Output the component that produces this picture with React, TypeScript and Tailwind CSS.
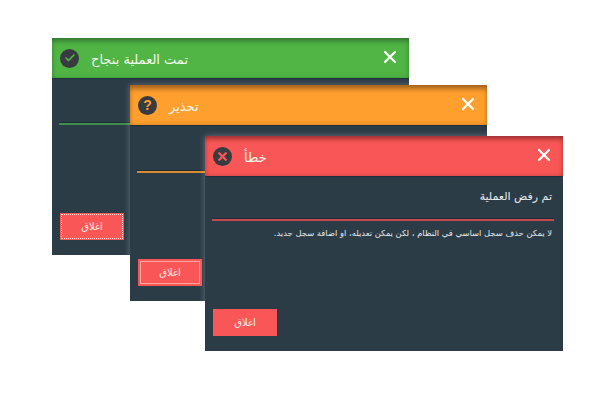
import {X, Check} from 'lucide-react';
import type {ReactNode} from 'react';

const arabic = '[font-family:"DejaVu_Sans",sans-serif]';

type DialogProps = {
  className: string;
  headerClass: string;
  icon: ReactNode;
  title: string;
  subtitle?: string;
  message?: string;
  ruleClass: string;
  buttonClass: string;
};

function StatusIcon({children, color}: {children: ReactNode; color: string}) {
  return (
    <span className={`flex h-[19px] w-[19px] items-center justify-center rounded-full bg-[#383b40] ${color}`}>
      {children}
    </span>
  );
}

function Dialog({className, headerClass, icon, title, subtitle, message, ruleClass, buttonClass}: DialogProps) {
  return (
    <div className={`absolute flex flex-col bg-[#2c3c47] shadow-[0_0_6px_rgba(255,255,255,0.28)] ${className}`}>
      <div className={`flex h-[41px] shrink-0 items-center justify-between border-b border-[#1d2f3e] pl-2 pr-[9px] ${headerClass}`}>
        <div className="flex items-center gap-3">
          {icon}
          <span className={`${arabic} mt-[3px] text-[13px] leading-none text-[#f4f7ee]`}>{title}</span>
        </div>
        <X size={20} strokeWidth={2.6} className="-mt-[3px] text-white" />
      </div>
      <div dir="rtl" className="flex flex-1 flex-col pb-[15px] pl-[7px] pr-[9px] pt-[12px]">
        <p className={`${arabic} h-[16px] pr-[2px] text-[11px] leading-[16px] text-[#e8edf0]`}>{subtitle}</p>
        <div className={`h-[3px] w-full shrink-0 border-t border-[#1d2f3e] ${ruleClass}`} />
        <p className={`${arabic} mt-[5px] h-[14px] pr-[2px] text-[8.4px] leading-[14px] text-[#e3e8eb]`}>{message}</p>
        <button
          className={`${arabic} ml-px mt-auto flex h-[27px] w-[64px] items-center justify-center self-end bg-[#f95757] text-[10px] text-[#fdeee6] ${buttonClass}`}
        >
          اغلاق
        </button>
      </div>
    </div>
  );
}

export default function App() {
  return (
    <div className="relative h-[400px] w-[600px] overflow-hidden bg-white">
      <Dialog
        className="left-[52px] top-[38px] h-[217px] w-[357px]"
        headerClass="bg-[#50b545] shadow-[inset_0_5px_5px_-2px_rgba(40,90,40,0.6),inset_0_0_5px_rgba(40,90,40,0.4)]"
        icon={
          <StatusIcon color="text-[#50b545]">
            <Check size={12} strokeWidth={3.5} />
          </StatusIcon>
        }
        title="تمت العملية بنجاح"
        ruleClass="mt-[15px] bg-[#3f8f4a]"
        buttonClass="outline-dotted outline-1 -outline-offset-2 outline-[#fde0d8]"
      />
      <Dialog
        className="left-[130px] top-[85px] h-[216px] w-[357px]"
        headerClass="bg-[#ffa02e] shadow-[inset_0_6px_5px_-2px_rgba(120,70,20,0.6),inset_0_0_5px_rgba(120,70,20,0.4)]"
        icon={
          <StatusIcon color="text-[#ffa02e]">
            <span className="font-['Liberation_Sans',sans-serif] text-[14px] font-bold leading-none">?</span>
          </StatusIcon>
        }
        title="تحذير"
        ruleClass="mt-[16px] bg-[#d98c2f]"
        buttonClass="outline outline-1 -outline-offset-3 outline-[#fda99f]"
      />
      <Dialog
        className="left-[205px] top-[136px] h-[215px] w-[358px]"
        headerClass="bg-[#f95757] shadow-[inset_0_5px_5px_-2px_rgba(110,30,30,0.6),inset_0_0_5px_rgba(110,30,30,0.4)]"
        icon={
          <StatusIcon color="text-[#f95757]">
            <X size={13} strokeWidth={4.5} />
          </StatusIcon>
        }
        title="خطأ"
        subtitle="تم رفض العملية"
        message="لا يمكن حذف سجل اساسي في النظام ، لكن يمكن تعديله، او اضافة سجل جديد."
        ruleClass="mt-[13px] bg-[#c4484c]"
        buttonClass=""
      />
    </div>
  );
}
